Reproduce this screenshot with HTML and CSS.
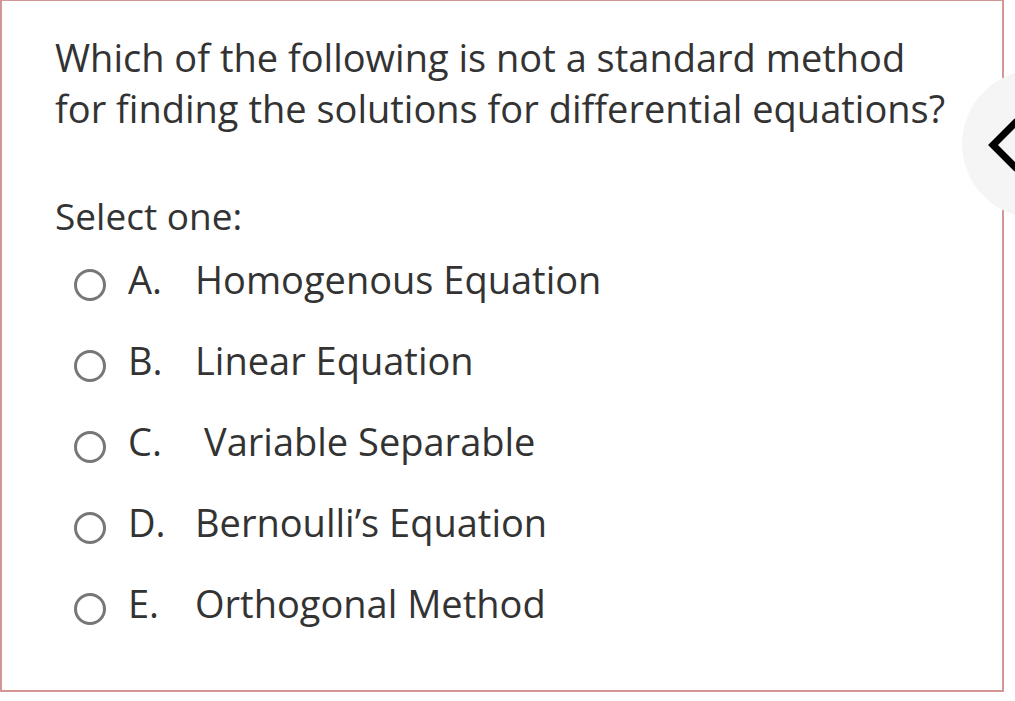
FILE: index.html
```html
<!DOCTYPE html>
<html>
<head>
<meta charset="utf-8">
<link rel="stylesheet" href="styles.css">
</head>
<body>
<div class="card">
  <div class="question">Which of the following is not a standard method<br>for finding the solutions for differential equations?</div>
  <div class="prompt">Select one:</div>
  <div class="answers">
    <div class="option"><span class="radio"></span><span class="letter">A.</span><span class="text">Homogenous Equation</span></div>
    <div class="option"><span class="radio"></span><span class="letter">B.</span><span class="text">Linear Equation</span></div>
    <div class="option"><span class="radio"></span><span class="letter">C.</span><span class="text shifted">Variable Separable</span></div>
    <div class="option"><span class="radio"></span><span class="letter">D.</span><span class="text">Bernoulli’s Equation</span></div>
    <div class="option"><span class="radio"></span><span class="letter">E.</span><span class="text">Orthogonal Method</span></div>
  </div>
</div>
<div class="nav">
  <svg class="chev" width="60" height="60" viewBox="0 0 60 60"><polyline points="30,6 6,30 30,54" fill="none" stroke="#000" stroke-width="7"/></svg>
</div>
</body>
</html>
```
FILE: styles.css
```css
html, body {
  margin: 0;
  padding: 0;
  background: #fff;
  width: 1015px;
  height: 701px;
  overflow: hidden;
  position: relative;
}
body {
  font-family: "Open Sans", sans-serif;
  color: #333;
}
.card {
  box-sizing: border-box;
  width: 1004px;
  height: 692px;
  border: 2px solid #d39696;
  border-top-width: 1px;
  padding: 31px 0 0 53px;
}
.question {
  font-size: 38px;
  line-height: 51px;
}
.prompt {
  font-size: 37px;
  line-height: 50px;
  margin-top: 57px;
}
.answers {
  display: flex;
  flex-direction: column;
  margin-top: -3px;
  padding-left: 19px;
}
.option {
  display: flex;
  align-items: center;
  height: 81px;
  font-size: 38px;
}
.radio {
  box-sizing: border-box;
  width: 32px;
  height: 32px;
  border: 3px solid #777;
  border-radius: 50%;
  margin-top: 12px;
  margin-right: 22px;
  flex: none;
}
.letter {
  width: 67px;
}
.shifted {
  padding-left: 9px;
}
.nav {
  position: absolute;
  left: 962px;
  top: 70px;
  width: 53px;
  height: 148px;
  overflow: hidden;
}
.nav::before {
  content: "";
  position: absolute;
  left: 0;
  top: 0;
  width: 148px;
  height: 148px;
  border-radius: 50%;
  background: #f5f5f5;
}
.chev {
  position: absolute;
  left: 25px;
  top: 45px;
}
```
